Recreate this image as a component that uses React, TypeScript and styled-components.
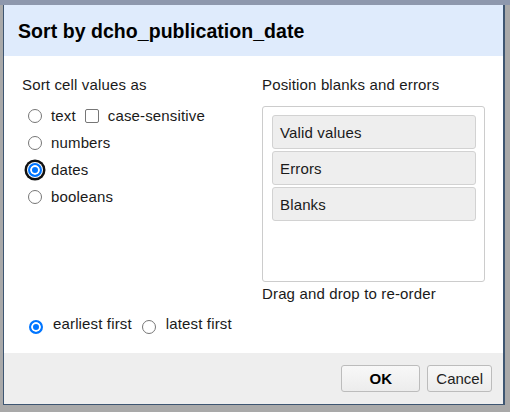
import React from 'react';
import styled, { createGlobalStyle, css } from 'styled-components';

const GlobalStyle = createGlobalStyle`
  html, body {
    margin: 0;
    padding: 0;
    background: #a9a9a9;
  }
  body {
    font-family: "Liberation Sans", Arial, sans-serif;
    color: #1a1a1a;
  }
`;

const Backdrop = styled.div`
  width: 510px;
  height: 412px;
  box-sizing: border-box;
  padding: 5px 0 0 3px;
  background: linear-gradient(#8e98ad 0, #8e98ad 5px, #a9a9a9 5px);
  overflow: hidden;
`;

const Dialog = styled.div`
  width: 502px;
  box-sizing: border-box;
  border-left: 1px solid #3e5672;
  border-right: 2px solid #3e5672;
  border-bottom: 1px solid #3e5672;
  background: #fff;
  display: flex;
  flex-direction: column;
`;

const Header = styled.div`
  height: 51px;
  box-sizing: border-box;
  padding: 15px 14px 0;
  background: #dfebfc;
`;

const Title = styled.h1`
  margin: 0;
  font-size: 19.5px;
  line-height: 23px;
  font-weight: bold;
  color: #000;
  letter-spacing: 0.05px;
`;

const Body = styled.div`
  height: 297px;
  box-sizing: border-box;
  padding: 20px 18px 0;
  font-size: 15px;
  line-height: 17px;
  letter-spacing: 0.15px;
`;

const Columns = styled.div`
  display: grid;
  grid-template-columns: 240px 1fr;
`;

const Column = styled.div`
  display: flex;
  flex-direction: column;
`;

const Heading = styled.div<{ $gap: number }>`
  margin-bottom: ${(p) => p.$gap}px;
`;

const OptionList = styled.div`
  display: flex;
  flex-direction: column;
  padding-left: 6px;
`;

const OptionRow = styled.label`
  height: 27px;
  display: flex;
  align-items: center;
  gap: 9px;
`;

const Radio = styled.input.attrs({ type: 'radio' })<{ $focused?: boolean; $drop?: boolean }>`
  appearance: none;
  margin: ${(p) => (p.$drop ? '6px 0 0' : '0')};
  flex: none;
  width: 14px;
  height: 14px;
  box-sizing: border-box;
  border-radius: 50%;
  border: 1px solid #767676;
  background: #fff;

  &:checked {
    border: 2px solid #0075ff;
    background: #0075ff;
    box-shadow: inset 0 0 0 2px #fff
      ${(p) =>
        p.$focused &&
        css`
          , 0 0 0 1px #fff, 0 0 0 3.5px #111
        `};
  }
`;

const Checkbox = styled.input.attrs({ type: 'checkbox' })`
  appearance: none;
  margin: 0;
  flex: none;
  width: 14px;
  height: 14px;
  box-sizing: border-box;
  border: 1px solid #767676;
  border-radius: 2px;
  background: #fff;
`;

const OrderBox = styled.div`
  height: 176px;
  box-sizing: border-box;
  border: 1px solid #cccccc;
  border-radius: 3px;
  padding: 8px 8px 0 9px;
  display: flex;
  flex-direction: column;
  gap: 2px;
`;

const OrderItem = styled.div`
  height: 34px;
  box-sizing: border-box;
  display: flex;
  align-items: center;
  padding-left: 7px;
  background: #eeeeee;
  border: 1px solid #d2d2d2;
  border-radius: 3px;
`;

const Hint = styled.div`
  margin-top: 3px;
`;

const BottomRow = styled.div`
  margin-top: 8px;
  padding-left: 7px;
  height: 27px;
  display: flex;
  align-items: center;
  gap: 10px;
`;

const Footer = styled.div`
  height: 51px;
  box-sizing: border-box;
  background: #eeeeee;
  display: flex;
  align-items: center;
  justify-content: flex-end;
  gap: 7px;
  padding-right: 11px;
`;

const Button = styled.button<{ $primary?: boolean }>`
  height: 27px;
  box-sizing: border-box;
  padding: 0 8px;
  min-width: ${(p) => (p.$primary ? '79px' : '0')};
  font-family: inherit;
  font-size: 15px;
  font-weight: ${(p) => (p.$primary ? 'bold' : 'normal')};
  color: ${(p) => (p.$primary ? '#000' : '#222')};
  background: linear-gradient(#f8f8f8, #ececec);
  border: 1px solid #bcbcbc;
  border-radius: 3px;
`;

const sortTypes = ['numbers', 'dates', 'booleans'];
const blankOrder = ['Valid values', 'Errors', 'Blanks'];

export default function App() {
  return (
    <>
      <GlobalStyle />
      <Backdrop>
        <Dialog>
          <Header>
            <Title>Sort by dcho_publication_date</Title>
          </Header>
          <Body>
            <Columns>
              <Column>
                <Heading $gap={9}>Sort cell values as</Heading>
                <OptionList>
                  <OptionRow>
                    <Radio name="valueType" />
                    <span>text</span>
                    <Checkbox />
                    <span>case-sensitive</span>
                  </OptionRow>
                  {sortTypes.map((t) => (
                    <OptionRow key={t}>
                      <Radio name="valueType" defaultChecked={t === 'dates'} $focused={t === 'dates'} />
                      <span>{t}</span>
                    </OptionRow>
                  ))}
                </OptionList>
              </Column>
              <Column>
                <Heading $gap={13}>Position blanks and errors</Heading>
                <OrderBox>
                  {blankOrder.map((item) => (
                    <OrderItem key={item}>{item}</OrderItem>
                  ))}
                </OrderBox>
                <Hint>Drag and drop to re-order</Hint>
              </Column>
            </Columns>
            <BottomRow>
              <Radio name="direction" defaultChecked $drop />
              <span>earliest first</span>
              <Radio name="direction" $drop />
              <span>latest first</span>
            </BottomRow>
          </Body>
          <Footer>
            <Button $primary>OK</Button>
            <Button>Cancel</Button>
          </Footer>
        </Dialog>
      </Backdrop>
    </>
  );
}
